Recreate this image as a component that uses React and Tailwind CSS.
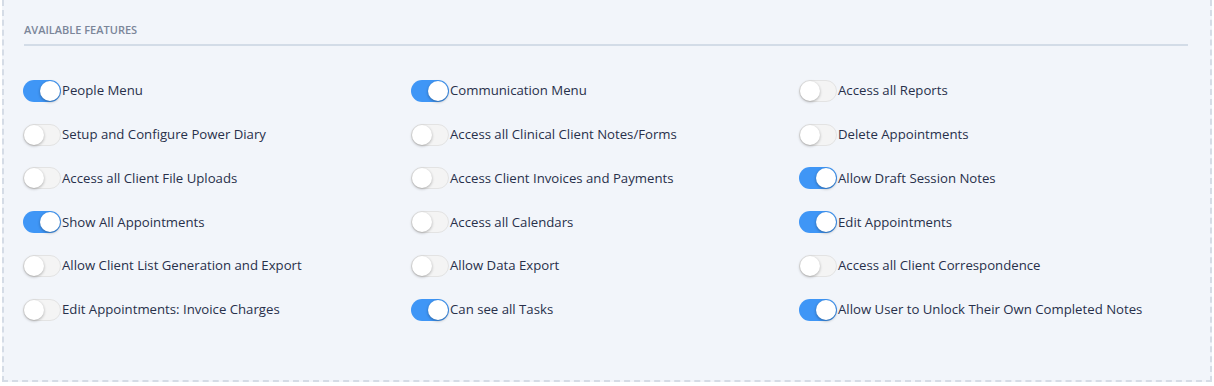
import React from "react";

const cols = [
  [
    ["People Menu", true],
    ["Setup and Configure Power Diary", false],
    ["Access all Client File Uploads", false],
    ["Show All Appointments", true],
    ["Allow Client List Generation and Export", false],
    ["Edit Appointments: Invoice Charges", false],
  ],
  [
    ["Communication Menu", true],
    ["Access all Clinical Client Notes/Forms", false],
    ["Access Client Invoices and Payments", false],
    ["Access all Calendars", false],
    ["Allow Data Export", false],
    ["Can see all Tasks", true],
  ],
  [
    ["Access all Reports", false],
    ["Delete Appointments", false],
    ["Allow Draft Session Notes", true],
    ["Edit Appointments", true],
    ["Access all Client Correspondence", false],
    ["Allow User to Unlock Their Own Completed Notes", true],
  ],
];

function Toggle({ on }) {
  return (
    <div
      className={
        on
          ? "relative w-[38px] h-[22px] rounded-full bg-[#3f96f6] shrink-0"
          : "relative w-[38px] h-[22px] rounded-full bg-[#f4f4f4] border border-[#e3e3e3] shrink-0"
      }
    >
      <div
        className={
          on
            ? "absolute top-[1px] right-[1px] w-[20px] h-[20px] rounded-full bg-white shadow-[0_1px_3px_rgba(0,0,0,0.35)]"
            : "absolute top-0 left-0 w-[20px] h-[20px] rounded-full bg-white shadow-[0_1px_3px_rgba(0,0,0,0.3)]"
        }
      />
    </div>
  );
}

export default function App() {
  const rows = [0, 1, 2, 3, 4, 5];
  return (
    <div className="w-[1214px] h-[386px] bg-white px-[2px] pb-[4px] overflow-hidden" style={{ fontFamily: '"Open Sans", sans-serif' }}>
      <div className="h-full border-2 border-t-0 border-dashed border-[#d5dce6] bg-[#f2f5fa] pl-[20px] pr-[20px] pt-[23px]">
        <div className="w-[1164px]">
          <div className="text-[11px] font-semibold text-[#7b8699] uppercase leading-[14px]">
            Available Features
          </div>
          <div className="mt-[7px] h-[2px] bg-[#d3dce7]" />
          <div className="mt-[23px] -ml-[1px] grid grid-cols-[388px_388px_388px]">
            {rows.map((r) =>
              cols.map((c, ci) => (
                <div key={r + "-" + ci} className="h-[43.8px] flex items-center">
                  <Toggle on={c[r][1]} />
                  <span className="ml-[1px] text-[13.2px] text-[#28304a] leading-none">{c[r][0]}</span>
                </div>
              ))
            )}
          </div>
        </div>
      </div>
    </div>
  );
}
